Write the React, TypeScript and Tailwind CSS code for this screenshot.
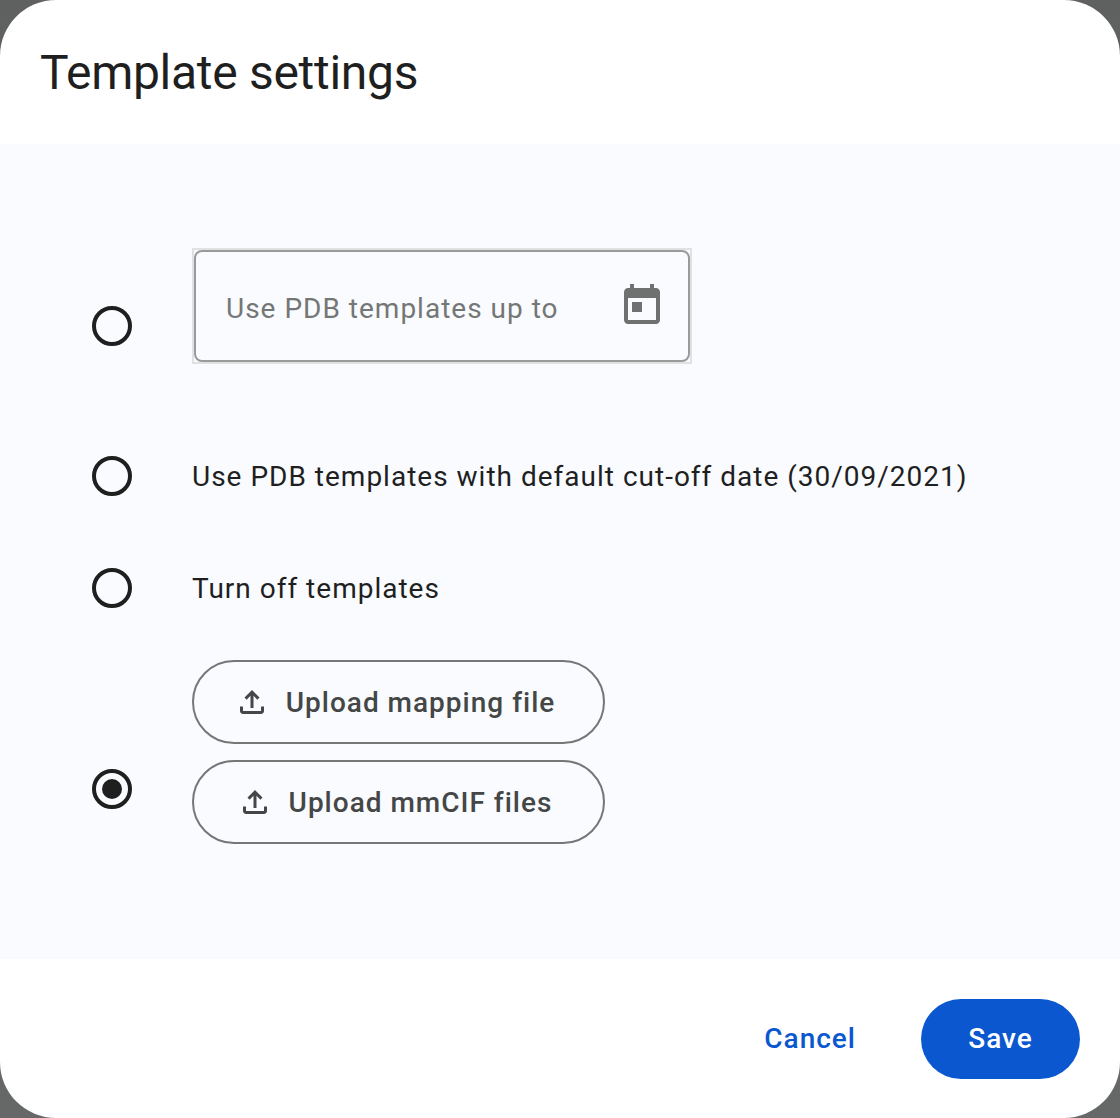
import React from "react";

const bodyFont = "font-['Roboto',sans-serif]";

const UploadIcon = () => (
  <svg viewBox="0 -960 960 960" className="w-[36px] h-[36px] fill-[#444746] shrink-0">
    <path d="M440-320v-326L336-542l-56-58 200-200 200 200-56 58-104-104v326h-80ZM240-160q-33 0-56.5-23.5T160-240v-120h80v120h480v-120h80v120q0 33-23.5 56.5T720-160H240Z" />
  </svg>
);

const Radio = ({ checked = false }: { checked?: boolean }) => (
  <div className="w-[40px] h-[40px] rounded-full border-[4px] border-[#1f1f1f] flex items-center justify-center shrink-0 mr-[60px]">
    {checked && <div className="w-[20px] h-[20px] rounded-full bg-[#1f1f1f]" />}
  </div>
);

const UploadButton = ({ label }: { label: string }) => (
  <button className="w-[413px] h-[84px] rounded-full border-2 border-[#747775] flex items-center justify-center gap-[16px] pr-[8px] text-[28px] font-medium text-[#444746] tracking-[1px]">
    <UploadIcon />
    <span className="translate-y-px">{label}</span>
  </button>
);

export default function App() {
  return (
    <div className="h-[1118px] w-[1120px] bg-gradient-to-b from-[#5f6060] to-[#666767] overflow-hidden">
      <div className={`h-full rounded-[56px] bg-white flex flex-col overflow-hidden ${bodyFont}`}>
        {/* Header */}
        <header className="h-[144px] px-[40px] pt-[2px] flex items-center shrink-0">
          <h1 className="text-[48px] text-[#1f1f1f] font-normal tracking-[-0.3px]">Template settings</h1>
        </header>

        {/* Options */}
        <main className="h-[815px] bg-[#f9fbff] px-[92px] pt-[104px] shrink-0">
          <div className="flex items-center">
            <Radio />
            <div className="pb-[40px]">
              <div className="w-[500px] h-[116px] border-2 border-[#e0e1e2] flex">
                <div className="flex-1 rounded-[8px] border-2 border-[#9a9a9a] flex items-center justify-between pl-[30px] pr-[22px] pt-[6px]">
                  <span className="text-[28px] text-[#747775] tracking-[1px]">Use PDB templates up to</span>
                  <svg viewBox="0 0 24 24" className="w-[48px] h-[48px] fill-[#6f7070] -translate-y-[3px]">
                    <path d="M19 3h-1V1h-2v2H8V1H6v2H5c-1.11 0-1.99.9-1.99 2L3 19c0 1.1.89 2 2 2h14c1.1 0 2-.9 2-2V5c0-1.1-.9-2-2-2zm0 16H5V8h14v11zM7 10h5v5H7z" />
                  </svg>
                </div>
              </div>
            </div>
          </div>

          <div className="flex items-center h-[112px] mt-[16px]">
            <Radio />
            <span className="text-[28px] text-[#1f1f1f] tracking-[1px] translate-y-px">Use PDB templates with default cut-off date (30/09/2021)</span>
          </div>

          <div className="flex items-center h-[112px]">
            <Radio />
            <span className="text-[28px] text-[#1f1f1f] tracking-[1px] translate-y-px">Turn off templates</span>
          </div>

          <div className="flex items-center mt-[16px]">
            <Radio checked />
            <div className="flex flex-col gap-[16px] pb-[74px]">
              <UploadButton label="Upload mapping file" />
              <UploadButton label="Upload mmCIF files" />
            </div>
          </div>
        </main>

        {/* Footer */}
        <footer className="flex-1 flex items-center justify-end pr-[40px] gap-[65px]">
          <button className="text-[28px] font-medium text-[#0b57d0] tracking-[1px]">Cancel</button>
          <button className="w-[159px] h-[80px] rounded-full bg-[#0b57d0] text-white text-[28px] font-medium tracking-[1px]">Save</button>
        </footer>
      </div>
    </div>
  );
}
